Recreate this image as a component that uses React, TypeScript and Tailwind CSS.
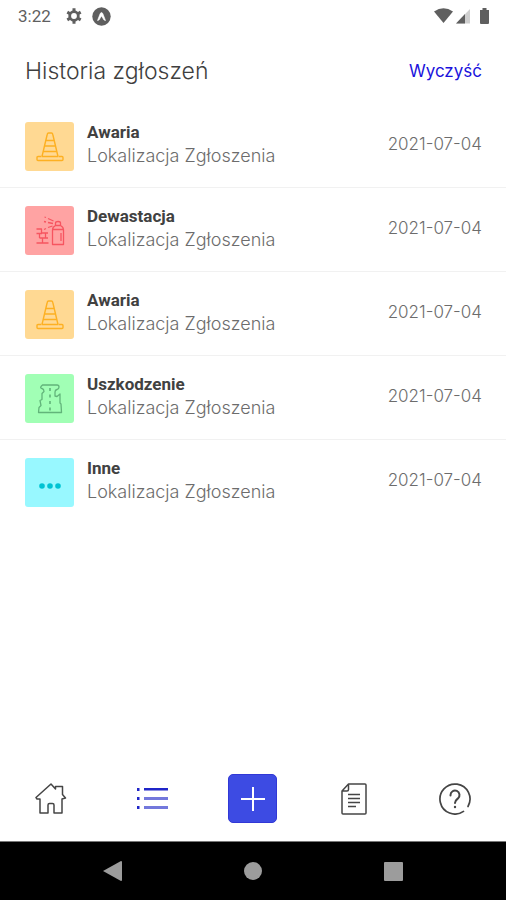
import type { ReactNode } from 'react'

type Report = {
  id: number
  kind: 'failure' | 'vandalism' | 'damage' | 'other'
  title: string
  location: string
  date: string
}

const reports: Report[] = [
  { id: 1, kind: 'failure', title: 'Awaria', location: 'Lokalizacja Zgłoszenia', date: '2021-07-04' },
  { id: 2, kind: 'vandalism', title: 'Dewastacja', location: 'Lokalizacja Zgłoszenia', date: '2021-07-04' },
  { id: 3, kind: 'failure', title: 'Awaria', location: 'Lokalizacja Zgłoszenia', date: '2021-07-04' },
  { id: 4, kind: 'damage', title: 'Uszkodzenie', location: 'Lokalizacja Zgłoszenia', date: '2021-07-04' },
  { id: 5, kind: 'other', title: 'Inne', location: 'Lokalizacja Zgłoszenia', date: '2021-07-04' },
]

const tiles = {
  failure: 'bg-[#ffd993] text-[#fdb022]',
  vandalism: 'bg-[#ffa3a3] text-[#f65560]',
  damage: 'bg-[#a1ffb5] text-[#62b47a]',
  other: 'bg-[#98f8ff] text-[#00c3d3]',
}

function ConeIcon() {
  return (
    <svg width="30" height="30" viewBox="0 0 30 30" fill="none" stroke="currentColor" strokeWidth="1.4" strokeLinejoin="round">
      <path d="M7 24.500 12.200 2.500q.3-1.500 1.300-1.500h3q1 0 1.300 1.500L23 24.500M10.800 8.500h8.400M9.500 14h11M8 19.500h14" />
      <path d="M6.500 24.500H3q-1 0-1 1v2q0 1 1 1h24q1 0 1-1v-2q0-1-1-1h-3.500M7 24.500h16" />
    </svg>
  )
}

function SprayIcon() {
  return (
    <svg width="30" height="30" viewBox="0 0 30 30" fill="none" stroke="currentColor" strokeWidth="1.300" strokeLinejoin="round">
      <path d="M17.500 28.500V14q0-3 3-4.500V7q0-1.500 2.500-1.500T25.500 7v2.500q3 1.500 3 4.500v14.500zM17.500 13.500h11M20.500 9.500h5M26 17v8" />
      <path d="M18.500 5 13 2.500M11 1.500 9.500 1M18 7.500l-5-1M11 6 9 5.500M17.500 10 13 11.500M11 12.500l-2 1" />
      <path d="M1.500 13h5v4h6.500M1.500 17.500H7M4.500 22H13M4.500 17.500V22M10.500 17v5M7.500 22v5M1.500 27h12" />
    </svg>
  )
}

function RoadIcon() {
  return (
    <svg width="30" height="30" viewBox="0 0 30 30" fill="none" stroke="currentColor" strokeWidth="1.300" strokeLinejoin="round">
      <path d="M7.500 1H22q2 0 2 2t-2 2.500q-2 .5-2 2.500v4l2 .5 3-2.500v9l1 1 .5 8.500H3.500l.5-5 2-2-1-5 2-1V9.500l2-2Q9 5 7 4.500T6 2.500z" />
      <path d="M15 4v3M15 10.500v3M15 17v3M15 23.500v3" strokeWidth="1.600" />
    </svg>
  )
}

function DotsIcon() {
  return (
    <svg width="30" height="30" viewBox="0 0 30 30" fill="currentColor">
      <circle cx="7" cy="18" r="2.800" />
      <circle cx="15" cy="18" r="2.800" />
      <circle cx="23" cy="18" r="2.800" />
    </svg>
  )
}

const icons: Record<Report['kind'], ReactNode> = {
  failure: <ConeIcon />,
  vandalism: <SprayIcon />,
  damage: <RoadIcon />,
  other: <DotsIcon />,
}

function StatusBar() {
  return (
    <div className="flex h-8 items-center justify-between pl-[18px] pr-4 text-[#5f5f5f]">
      <div className="flex items-center">
        <span className="w-12 font-['Roboto',sans-serif] text-[17px] leading-5">3:22</span>
        <svg width="16" height="16" viewBox="0 0 16 16" fill="none" stroke="currentColor">
          <circle cx="8" cy="8" r="4.300" strokeWidth="2.800" />
          <path d="M8 .3v3M8 12.700v3M1.300 4.100 4 5.700M12 10.300l2.700 1.600M1.300 11.900 4 10.300M12 5.700l2.700-1.600" strokeWidth="3" />
        </svg>
        <svg className="ml-[10px]" width="19" height="19" viewBox="0 0 19 19">
          <circle cx="9.500" cy="9.500" r="9.200" fill="currentColor" />
          <path d="M5.500 13.500 8.200 6.500q1.300-2 2.600 0l2.700 7-1.500-.5-2.500-4-2.500 4z" fill="#fff" stroke="#fff" strokeWidth=".6" strokeLinejoin="round" />
        </svg>
      </div>
      <svg width="56" height="16" viewBox="0 0 56 16" fill="currentColor">
        <path d="M0 3.500Q9.500-3 19 3.500L9.500 15z" />
        <path d="M22 15.500 36 1v14.500z" fill="#cfcfcf" />
        <path d="M22 15.500 31 6v9.500z" />
        <path d="M46 2h2.500V0h4v2H55v13q0 1-1 1h-7q-1 0-1-1z" />
      </svg>
    </div>
  )
}

function ReportRow({ report }: { report: Report }) {
  return (
    <li className="flex items-start gap-[13px] border-b border-[#f1f1f1] pt-[18px] pr-6 pb-4 pl-[25px] last:border-transparent">
      <div className={`flex size-[49px] shrink-0 items-center justify-center rounded-[3px] ${tiles[report.kind]}`}>
        {icons[report.kind]}
      </div>
      <div className="min-w-0 flex-1">
        <h2 className="font-['Roboto',sans-serif] text-[17px] leading-5 font-bold text-[#414141]">{report.title}</h2>
        <p className="mt-1 text-[18px] leading-5 font-light text-[#6c6c6c]">{report.location}</p>
      </div>
      <time dateTime={report.date} className="pt-3 text-[17px] leading-5 font-light text-[#6c6c6c]">
        {report.date}
      </time>
    </li>
  )
}

function TabBar() {
  return (
    <nav className="grid grid-cols-5 items-center justify-items-center pb-[18px] text-[#454545]">
      <button type="button" aria-label="Start">
        <svg width="32" height="32" viewBox="0 0 32 32" fill="none" stroke="currentColor" strokeWidth="1.500" strokeLinejoin="round">
          <path d="M5 16v14h8V22q0-1.500 1.500-1.500h3q1.500 0 1.500 1.500v8h8V16l3.500-1-3-3.500V3.500h-7V6L16 1 1 14.500l1 1.500z" />
        </svg>
      </button>
      <button type="button" aria-label="Historia">
        <svg width="32" height="32" viewBox="0 0 32 32" fill="#1f25c8">
          <path d="M1 5h2.500v3H1zM1 14h2.500v3H1zM1 23h2.500v3H1zM8 5h24v2.500H8z" />
          <path d="M8 14h24v3H8zM8 23h24v3H8z" fill="#7378dc" />
        </svg>
      </button>
      <button type="button" aria-label="Dodaj" className="flex size-[49px] items-center justify-center rounded-[5px] border border-[#3138d6] bg-[#3d4be3]">
        <svg width="26" height="26" viewBox="0 0 26 26" stroke="#fff" strokeWidth="2">
          <path d="M13 1v24M1 13h24" />
        </svg>
      </button>
      <button type="button" aria-label="Dokumenty">
        <svg width="26" height="32" viewBox="0 0 26 32" fill="none" stroke="currentColor" strokeWidth="1.500" strokeLinejoin="round">
          <path d="M7.500 1H24q1 0 1 1v28q0 1-1 1H2q-1 0-1-1V8zv5.500q0 1.500-1.500 1.500H1" />
          <path d="M7 11.500h12M7 15.500h12M7 19.500h12M7 23.500h8" strokeWidth="1.700" />
        </svg>
      </button>
      <button type="button" aria-label="Pomoc">
        <svg width="32" height="32" viewBox="0 0 32 32" fill="none" stroke="currentColor" strokeWidth="1.700" strokeLinecap="round">
          <path d="M24.500 28.400A15 15 0 1 1 29 23.500" />
          <path d="M11.500 12.500v-.5a4.500 4.500 0 1 1 7.500 3.400c-2 1.600-3 2.100-3 4.600" strokeWidth="2" />
          <circle cx="16" cy="24" r="1.200" fill="currentColor" stroke="none" />
        </svg>
      </button>
    </nav>
  )
}

function SystemBar() {
  return (
    <div className="grid h-[59px] grid-cols-3 items-center justify-items-center border-t border-[#777] bg-black px-[43px] text-[#9c9c9c]">
      <button type="button" aria-label="Wstecz">
        <svg width="20" height="20" viewBox="0 0 20 20" fill="currentColor">
          <path d="M0 10 18 0q1 0 1 1v18q0 1-1 1z" />
        </svg>
      </button>
      <button type="button" aria-label="Ekran główny" className="size-[18px] rounded-full bg-[#9c9c9c]" />
      <button type="button" aria-label="Ostatnie aplikacje" className="size-[19px] rounded-[1px] bg-[#9c9c9c]" />
    </div>
  )
}

export default function App() {
  return (
    <div className="flex min-h-screen flex-col bg-white font-['Inter',sans-serif]">
      <StatusBar />
      <header className="flex h-[72px] items-center justify-between pt-[6px] pr-6 pl-[25px]">
        <h1 className="text-[23px] leading-8 font-light text-[#3f3f3f]">Historia zgłoszeń</h1>
        <button type="button" className="text-[17px] leading-6 text-[#1a12dc]">
          Wyczyść
        </button>
      </header>
      <main className="flex-1">
        <ul>
          {reports.map((report) => (
            <ReportRow key={report.id} report={report} />
          ))}
        </ul>
      </main>
      <TabBar />
      <SystemBar />
    </div>
  )
}
